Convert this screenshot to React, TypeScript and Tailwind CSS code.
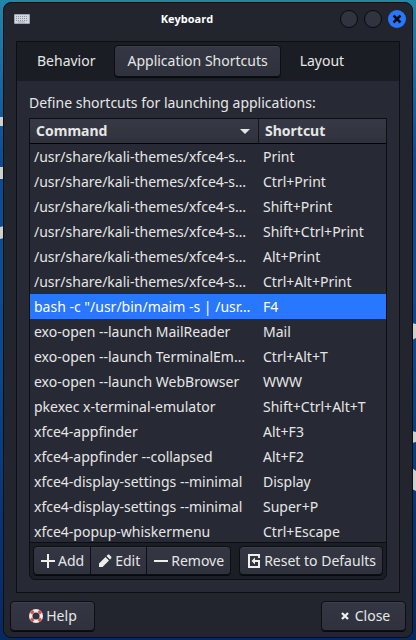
import type { ReactNode } from "react";

type Row = { command: string; shortcut: string; selected?: boolean };

const rows: Row[] = [
  { command: "/usr/share/kali-themes/xfce4-s…", shortcut: "Print" },
  { command: "/usr/share/kali-themes/xfce4-s…", shortcut: "Ctrl+Print" },
  { command: "/usr/share/kali-themes/xfce4-s…", shortcut: "Shift+Print" },
  { command: "/usr/share/kali-themes/xfce4-s…", shortcut: "Shift+Ctrl+Print" },
  { command: "/usr/share/kali-themes/xfce4-s…", shortcut: "Alt+Print" },
  { command: "/usr/share/kali-themes/xfce4-s…", shortcut: "Ctrl+Alt+Print" },
  { command: 'bash -c "/usr/bin/maim -s | /usr…', shortcut: "F4", selected: true },
  { command: "exo-open --launch MailReader", shortcut: "Mail" },
  { command: "exo-open --launch TerminalEm…", shortcut: "Ctrl+Alt+T" },
  { command: "exo-open --launch WebBrowser", shortcut: "WWW" },
  { command: "pkexec x-terminal-emulator", shortcut: "Shift+Ctrl+Alt+T" },
  { command: "xfce4-appfinder", shortcut: "Alt+F3" },
  { command: "xfce4-appfinder --collapsed", shortcut: "Alt+F2" },
  { command: "xfce4-display-settings --minimal", shortcut: "Display" },
  { command: "xfce4-display-settings --minimal", shortcut: "Super+P" },
  { command: "xfce4-popup-whiskermenu", shortcut: "Ctrl+Escape" },
];

const raised =
  "border border-[#0d0e12] bg-linear-to-b from-[#343743] to-[#2f323d] shadow-[inset_0_1px_0_#3d404c,0_1px_0_#08090c]";

function Wallpaper() {
  return (
    <svg className="absolute inset-0 size-full" aria-hidden="true">
      <defs>
        <linearGradient id="sea" x1="0" y1="0" x2="0" y2="1">
          <stop offset="0" stopColor="#2286a8" />
          <stop offset="0.1" stopColor="#1a6fa6" />
          <stop offset="0.25" stopColor="#0d4c92" />
          <stop offset="0.55" stopColor="#0b4a8d" />
          <stop offset="0.8" stopColor="#073675" />
          <stop offset="1" stopColor="#062a5f" />
        </linearGradient>
      </defs>
      <rect width="100%" height="100%" fill="url(#sea)" />
      <g fill="#cfd0d0">
        <path d="M0 117h4v9H0zM0 167h4v12H0zM0 227l4-1v12l-4 1z" />
        <svg x="100%" overflow="visible">
          <path d="M-4 323l4 1v14l-4 2zM-4 431l4 1v10l-4 1zM-4 468l4 3v20l-4-2z" />
        </svg>
      </g>
    </svg>
  );
}

function KeyboardIcon() {
  return (
    <svg className="size-4" viewBox="0 0 16 16" aria-hidden="true">
      <rect x="0" y="3" width="16" height="10" rx="1" fill="#9da4b4" />
      <rect x="1" y="4" width="14" height="8" fill="#d3d7df" />
      <path d="M2 5.500h12M2 7.500h12M2 9.500h12" stroke="#8b909d" strokeDasharray="1 1" />
      <path d="M4 11h7" stroke="#a1a6b2" />
    </svg>
  );
}

function AddIcon() {
  return (
    <svg className="size-4" viewBox="0 0 16 16" aria-hidden="true">
      <path d="M1 8h14M8 1v14" stroke="#eeeeec" strokeWidth="2" />
    </svg>
  );
}

function EditIcon() {
  return (
    <svg className="size-4" viewBox="0 0 16 16" fill="#eeeeec" aria-hidden="true">
      <path d="M2 14v-3.500L8.500 4l3.500 3.500L5.500 14zM9.500 3l1-1c.6-.6 1.400-.6 2 0l1.500 1.500c.6.6.6 1.400 0 2l-1 1z" />
    </svg>
  );
}

function RemoveIcon() {
  return (
    <svg className="size-4" viewBox="0 0 16 16" aria-hidden="true">
      <path d="M1 8h14" stroke="#eeeeec" strokeWidth="2" />
    </svg>
  );
}

function ResetIcon() {
  return (
    <svg className="size-4" viewBox="0 0 16 16" aria-hidden="true">
      <path d="M13 5V2H3v12h10v-5" fill="none" stroke="#eeeeec" strokeWidth="2" />
      <path d="M5.500 8L9 4.500V7h5v2H9v2.500z" fill="#eeeeec" />
    </svg>
  );
}

function HelpIcon() {
  return (
    <svg className="size-4" viewBox="0 0 16 16" aria-hidden="true">
      <circle cx="8" cy="8" r="5.300" fill="none" stroke="#efedeb" strokeWidth="3.400" />
      <path
        d="M3 5.500L5.500 3M10.500 3L13 5.500M13 10.500L10.500 13M5.500 13L3 10.500"
        stroke="#e2484a"
        strokeWidth="2.500"
      />
    </svg>
  );
}

function CloseIcon() {
  return (
    <svg className="size-4" viewBox="0 0 16 16" aria-hidden="true">
      <path d="M5 5l6 6M11 5l-6 6" stroke="#eeeeec" strokeWidth="2.300" />
    </svg>
  );
}

function Tab({ children, active = false }: { children: ReactNode; active?: boolean }) {
  return (
    <button
      role="tab"
      aria-selected={active}
      className={`h-8 rounded px-3 ${active ? raised : "border border-transparent"}`}
    >
      {children}
    </button>
  );
}

function ActionButton({ icon, label, className }: { icon: ReactNode; label: string; className: string }) {
  return (
    <button className={`flex h-[29px] items-center gap-0.5 whitespace-nowrap px-1.5 ${raised} ${className}`}>
      {icon}
      {label}
    </button>
  );
}

export default function App() {
  return (
    <div className="relative h-screen min-h-[400px] bg-[#0b4a8d] px-[3px] py-0.5 font-['Noto_Sans',sans-serif] text-sm text-[#e6e6e6]">
      <Wallpaper />
      <main className="relative flex h-full flex-col rounded-lg border border-[#0c0d11] bg-[#23252e]">
        <header className="flex h-[38px] shrink-0 items-center pr-1.5 pb-1.5 pl-2.5">
          <KeyboardIcon />
          <h1 className="flex-1 pl-1 text-center font-['Open_Sans','Noto_Sans',sans-serif] text-[11px] font-bold text-white">
            Keyboard
          </h1>
          <div className="flex justify-end gap-1.5">
            <button aria-label="Minimize" className="size-[18px] rounded-full border border-[#090a0d] bg-[#31343f]" />
            <button aria-label="Maximize" className="size-[18px] rounded-full border border-[#090a0d] bg-[#31343f]" />
            <button aria-label="Close window" className="grid size-[18px] place-items-center rounded-full bg-[#2777ff]">
              <svg className="size-2.5" viewBox="0 0 10 10" aria-hidden="true">
                <path d="M1.500 1.500l7 7M8.500 1.500l-7 7" stroke="#0b0d14" strokeWidth="2.500" />
              </svg>
            </button>
          </div>
        </header>

        <section className="mx-3 flex min-h-0 flex-1 flex-col border border-[#0d0e12] bg-[#272a34]">
          <div role="tablist" className="flex h-[39px] shrink-0 gap-1.5 bg-[#1b1d24] pt-[3px] pl-[7px]">
            <Tab>Behavior</Tab>
            <Tab active>Application Shortcuts</Tab>
            <Tab>Layout</Tab>
          </div>

          <div className="flex min-h-0 flex-1 flex-col p-3">
            <p className="mb-[5px]">Define shortcuts for launching applications:</p>

            <div className="flex min-h-0 flex-1 flex-col rounded-b-md border border-[#0d0e12] bg-[#1c1e25]">
              <div className="min-h-0 flex-1 overflow-hidden bg-[#272a34]">
                <table className="w-full table-fixed border-separate border-spacing-0 text-left whitespace-nowrap">
                  <colgroup>
                    <col className="w-[229px]" />
                    <col />
                  </colgroup>
                  <thead>
                    <tr className="h-[25px] bg-linear-to-b from-[#373a46] to-[#2f323d]">
                      <th className="border-r border-b border-r-[#14151a] border-b-black px-1.5 py-0 font-bold">
                        <span className="flex items-center justify-between">
                          Command
                          <svg className="mr-0.5 h-[5px] w-2.5 shrink-0" viewBox="0 0 10 5" aria-hidden="true">
                            <path d="M0 0h10L5 5z" fill="#e6e6e6" />
                          </svg>
                        </span>
                      </th>
                      <th className="border-b border-black px-1.5 py-0 font-bold">Shortcut</th>
                    </tr>
                  </thead>
                  <tbody>
                    {rows.map((row, i) => (
                      <tr key={i} className={`h-[25px] ${row.selected ? "bg-[#2777ff] text-white" : ""}`}>
                        <td className="px-1 py-0">{row.command}</td>
                        <td className="px-1 py-0">{row.shortcut}</td>
                      </tr>
                    ))}
                  </tbody>
                </table>
              </div>

              <div className="flex justify-between border-t border-[#0d0e12] px-[3px] pt-[3px] pb-1">
                <div className="flex">
                  <ActionButton icon={<AddIcon />} label="Add" className="rounded-l" />
                  <ActionButton icon={<EditIcon />} label="Edit" className="-ml-px" />
                  <ActionButton icon={<RemoveIcon />} label="Remove" className="-ml-px rounded-r" />
                </div>
                <ActionButton icon={<ResetIcon />} label="Reset to Defaults" className="rounded" />
              </div>
            </div>
          </div>
        </section>

        <footer className="flex shrink-0 justify-between px-1.5 pt-2 pb-1.5">
          <button className={`flex h-[30px] w-[85px] items-center justify-center gap-0.5 rounded ${raised}`}>
            <HelpIcon />
            Help
          </button>
          <button className={`flex h-[30px] w-[85px] items-center justify-center gap-0.5 rounded ${raised}`}>
            <CloseIcon />
            Close
          </button>
        </footer>
      </main>
    </div>
  );
}
